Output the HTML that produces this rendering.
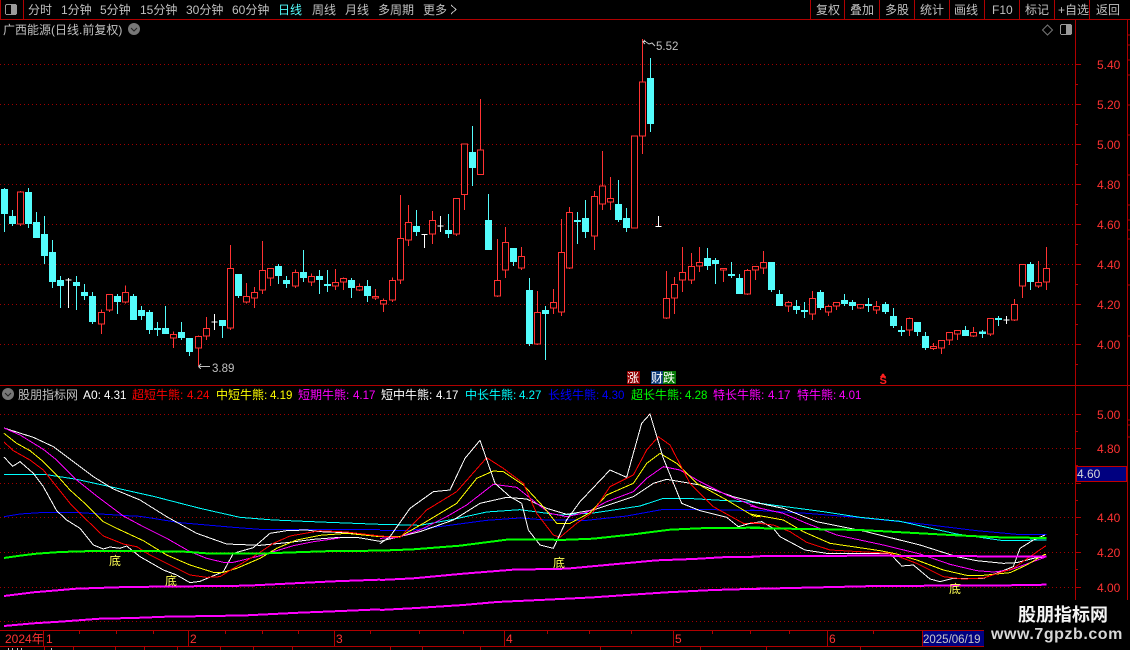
<!DOCTYPE html>
<html><head><meta charset="utf-8"><style>
html,body{margin:0;padding:0;background:#000;width:1130px;height:650px;overflow:hidden}
svg{position:absolute;left:0;top:0;display:block}
text{font-family:"Liberation Sans","WenQuanYi Zen Hei","Noto Sans CJK SC",sans-serif;font-size:12px;fill:#c0c0c0;white-space:pre}
.l{stroke:#b00000;stroke-width:1;fill:none}
.g{stroke:#a00000;stroke-width:1;stroke-dasharray:1 3;fill:none}
.ax{fill:#ff3232;font-size:12px}
.n{font-size:11.5px}
.z{stroke-width:3;fill:none}
.d{fill:#ffff54;font-size:12px}
</style></head><body>
<svg width="1130" height="650" viewBox="0 0 1130 650" shape-rendering="crispEdges">
<rect width="1130" height="650" fill="#000"/>

<!-- toolbar -->
<path class="l" d="M0 19.5H1130M.5 0V19M23.5 0V19M810.5 0V19M844.5 0V19M879.5 0V19M914.5 0V19M949.5 0V19M984.5 0V19M1019.5 0V19M1054.5 0V19M1089.5 0V19"/>
<rect x="5.5" y="4.5" width="11" height="10" rx="1.5" fill="none" stroke="#999"/><rect x="11" y="5" width="5" height="9" fill="#999"/>
<text x="28" y="14">分时</text><text x="61" y="14">1分钟</text><text x="100" y="14">5分钟</text><text x="140" y="14">15分钟</text><text x="186" y="14">30分钟</text><text x="232" y="14">60分钟</text>
<text x="278" y="14" style="fill:#54fcfc">日线</text><text x="312" y="14">周线</text><text x="345" y="14">月线</text><text x="378" y="14">多周期</text><text x="423" y="14">更多</text>
<path d="M451 5L456 9.5L451 14" fill="none" stroke="#c0c0c0"/>
<text x="816" y="14">复权</text><text x="850" y="14">叠加</text><text x="885" y="14">多股</text><text x="920" y="14">统计</text><text x="954" y="14">画线</text><text x="992" y="14">F10</text><text x="1025" y="14">标记</text><text x="1058" y="14">+自选</text><text x="1096" y="14">返回</text>

<!-- title -->
<text x="3" y="34">广西能源(日线.前复权)</text>
<circle cx="134" cy="29" r="6" fill="#777" shape-rendering="auto"/>
<path d="M131 28L134 31L137 28" fill="none" stroke="#222" shape-rendering="auto"/>
<path d="M1047.5 25L1052.5 30L1047.5 35L1042.5 30Z" fill="none" stroke="#777" shape-rendering="auto"/>
<rect x="1060.5" y="24.5" width="11" height="10" rx="1.5" fill="none" stroke="#999"/><rect x="1066" y="25" width="5" height="9" fill="#999"/>

<!-- axes -->
<path class="l" d="M1075.5 19V630M1127.5 19V630M0 385.5H1130M0 630.5H1130M0 646.5H1130"/>
<path class="g" d="M0 64.5H1075M0 104.5H1075M0 144.5H1075M0 184.5H1075M0 224.5H1075M0 264.5H1075M0 304.5H1075M0 344.5H1075"/>
<path class="g" d="M0 414.5H1075M0 448.5H1075M0 483.5H1075M0 517.5H1075M0 552.5H1075M0 587.5H1075M0 621.5H1075"/>
<path class="l" d="M1075 64.5h6M1075 104.5h6M1075 144.5h6M1075 184.5h6M1075 224.5h6M1075 264.5h6M1075 304.5h6M1075 344.5h6M1075 84.5h3M1075 124.5h3M1075 164.5h3M1075 204.5h3M1075 244.5h3M1075 284.5h3M1075 324.5h3M1075 364.5h3M1075 414.5h6M1075 448.5h6M1075 483.5h6M1075 517.5h6M1075 552.5h6M1075 587.5h6M1075 431.5h3M1075 465.5h3M1075 500.5h3M1075 534.5h3M1075 569.5h3M1075 604.5h3"/>
<path class="l" d="M1127 35h3M1127 45h3M1127 60h3M1127 75h3M1127 105h3M1127 135h3M1127 175h3M1127 205h3M1127 220h3M1127 230h3M1127 239h3M1127 285h3M1127 336h3M1127 420h3M1127 425h3M1127 437h3"/>
<text class="ax" x="1097" y="69">5.40</text><text class="ax" x="1097" y="109">5.20</text><text class="ax" x="1097" y="149">5.00</text><text class="ax" x="1097" y="189">4.80</text><text class="ax" x="1097" y="229">4.60</text><text class="ax" x="1097" y="269">4.40</text><text class="ax" x="1097" y="309">4.20</text><text class="ax" x="1097" y="349">4.00</text>
<text class="ax" x="1097" y="419">5.00</text><text class="ax" x="1097" y="453">4.80</text><text class="ax" x="1097" y="522">4.40</text><text class="ax" x="1097" y="557">4.20</text><text class="ax" x="1097" y="592">4.00</text>
<rect x="1076.5" y="466.5" width="50" height="15" fill="#000080" stroke="#c00000"/>
<text x="1077" y="478" style="fill:#d8d8d8">4.60</text>

<!-- candles left -->
<g transform="translate(.17 190.17) scale(.33333)">
<path class="z" stroke="#ff3232" d="M61 3V107M304 358V432M328 313V366M376 286V340M520 424V474M595 436V528M619 381V450M691 165V420M739 279V340M763 291V354M787 153V312M811 235V288M886 238V294M934 250V288M1006 237V300M1030 262V300M1078 280V302M1126 297V330"/>
<path stroke-width="3" stroke="#ff3232" fill="#000" d="M52 6h18V102h-18zM295 367h18V402h-18zM319 313h18V360h-18zM367 307h18V336h-18zM511 433h18V443h-18zM586 439h18V474h-18zM610 415h18V438h-18zM682 235h18V414h-18zM730 319h18V336h-18zM754 307h18V324h-18zM778 241h18V300h-18zM802 235h18V264h-18zM877 247h18V288h-18zM925 259h18V275h-18zM997 277h18V288h-18zM1021 265h18V275h-18zM1069 289h18V300h-18zM1117 319h18V324h-18z"/>
<path class="z" stroke="#54fcfc" d="M13-6V126M37 60V108M85-6V114M109 66V144M133 78V222M157 150V294M181 258V354M229 258V360M253 282V330M277 306V402M352 312V372M400 312V390M424 348V390M448 360V432M472 396V438M496 348V432M544 396V450M568 444V498M667 390V444M715 252V324M835 222V282M859 258V294M910 180V276M958 240V312M982 240V306M1054 264V324M1102 270V336"/>
<path fill="#54fcfc" d="M2.5 -3h21V71h-21zM26.5 78h21V102h-21zM74.5 6h21V102h-21zM98.5 96h21V144h-21zM122.5 132h21V198h-21zM146.5 186h21V276h-21zM170.5 270h21V288h-21zM218.5 276h21V288h-21zM242.5 306h21V318h-21zM266.5 318h21V396h-21zM341.5 318h21V336h-21zM389.5 318h21V390h-21zM413.5 360h21V378h-21zM437.5 366h21V420h-21zM461.5 414h21V420h-21zM485.5 414h21V432h-21zM533.5 426h21V444h-21zM557.5 444h21V486h-21zM656.5 390h21V408h-21zM704.5 252h21V318h-21zM824.5 228h21V258h-21zM848.5 270h21V282h-21zM899.5 246h21V264h-21zM947.5 258h21V270h-21zM971.5 282h21V288h-21zM1043.5 270h21V294h-21zM1091.5 288h21V318h-21z"/>
<path class="z" stroke="#fff" d="M205 264V354M196 270h18M643 372V420M634 396h18"/>
</g>

<!-- candles middle -->
<g transform="translate(380.17 190.17) scale(.33333)">
<path class="z" stroke="#ff3232" d="M10 325V366M37 262V336M61 15V282M85 45V168M157 63V162M229 25V138M253-138V60M301-273V-45M352 147V320M376 111V264M424 171V240M472 303V464M520 297V372M544 87V378M568 51V236M643 3V180M667-117V60M691-39V60M763-162V115M787-453V-108M859 243V386M883 261V372M907 171V306M934 189V282M958 171V246M1030 234V276M1102 237V314"/>
<path stroke-width="3" stroke="#ff3232" fill="#000" d="M1 331h18V342h-18zM28 271h18V330h-18zM52 145h18V270h-18zM76 97h18V150h-18zM148 91h18V132h-18zM220 25h18V132h-18zM244 -138h18V13h-18zM292 -120h18V-47h-18zM343 271h18V318h-18zM367 157h18V240h-18zM415 199h18V234h-18zM463 367h18V462h-18zM511 337h18V354h-18zM535 187h18V366h-18zM559 67h18V234h-18zM634 19h18V138h-18zM658 -12h18V42h-18zM682 25h18V35h-18zM754 -162h18V113h-18zM778 -324h18V-162h-18zM850 325h18V384h-18zM874 283h18V324h-18zM898 247h18V270h-18zM925 229h18V270h-18zM949 217h18V228h-18zM1021 235h18V240h-18zM1093 241h18V312h-18z"/>
<path class="z" stroke="#54fcfc" d="M109 60V138M205 72V144M277-192V-12M325 12V180M400 174V228M448 264V468M496 348V510M592 66V162M616 30V144M715-30V96M739 54V126M811-396V-174M982 174V240M1006 204V282M1054 216V264M1078 252V312"/>
<path fill="#54fcfc" d="M98.5 108h21V126h-21zM194.5 120h21V132h-21zM266.5 -114h21V-66h-21zM314.5 90h21V180h-21zM389.5 174h21V216h-21zM437.5 300h21V462h-21zM485.5 360h21V372h-21zM581.5 90h21V96h-21zM605.5 84h21V126h-21zM704.5 42h21V90h-21zM728.5 84h21V114h-21zM800.5 -336h21V-198h-21zM971.5 204h21V228h-21zM995.5 210h21V222h-21zM1043.5 252h21V258h-21zM1067.5 264h21V312h-21z"/>
<path class="z" stroke="#fff" d="M133 132V174M124 133h18M181 78V126M172 108h18M835 78V110M826 109h18"/>
</g>

<!-- candles right -->
<g transform="translate(750.17 190.17) scale(.33333)">
<path class="z" stroke="#ff3232" d="M16 229V270M40 183V252M115 333V366M187 303V390M235 345V378M259 336V360M331 342V356M379 333V372M478 382V438M550 459V480M574 451V492M598 427V464M622 421V450M670 411V440M721 383V438M793 327V392M817 223V324M865 213V294M889 171V300"/>
<path stroke-width="3" stroke="#ff3232" fill="#000" d="M7 229h18V240h-18zM31 217h18V234h-18zM106 337h18V348h-18zM178 325h18V372h-18zM226 349h18V366h-18zM250 337h18V347h-18zM322 343h18V354h-18zM370 349h18V360h-18zM469 385h18V420h-18zM541 469h18V475h-18zM565 451h18V474h-18zM589 427h18V450h-18zM613 421h18V432h-18zM661 427h18V438h-18zM712 385h18V432h-18zM784 343h18V390h-18zM808 223h18V288h-18zM856 277h18V288h-18zM880 235h18V276h-18z"/>
<path class="z" stroke="#54fcfc" d="M64 216V306M88 300V348M139 330V372M163 336V384M211 300V360M283 312V348M307 330V360M355 324V366M406 336V372M430 354V414M454 408V438M502 396V438M526 426V480M646 408V438M697 420V444M745 378V408M841 216V300"/>
<path fill="#54fcfc" d="M53.5 216h21V300h-21zM77.5 312h21V348h-21zM128.5 348h21V360h-21zM152.5 360h21V366h-21zM200.5 306h21V354h-21zM272.5 330h21V342h-21zM296.5 336h21V348h-21zM344.5 342h21V348h-21zM395.5 342h21V366h-21zM419.5 378h21V408h-21zM443.5 420h21V426h-21zM491.5 396h21V426h-21zM515.5 438h21V474h-21zM635.5 420h21V438h-21zM686.5 424h21V432h-21zM734.5 384h21V390h-21zM830.5 222h21V276h-21z"/>
<path class="z" stroke="#fff" d="M769 378V402M760 390h18"/>
</g>

<!-- markers -->
<path d="M642.5 41.5H646M643 42L645 40M643 42L645 44M646 42L649 44L652 43L655 46" fill="none" stroke="#c8c8c8" shape-rendering="auto"/>
<text x="656" y="50" class="n">5.52</text>
<path d="M198.5 366.5H210M198.5 366.5L201 364M198.5 366.5L201 369" fill="none" stroke="#c0c0c0"/>
<text x="212" y="372" class="n">3.89</text>
<rect x="627" y="371" width="13" height="13" fill="#900000"/><text x="627" y="382" style="fill:#fff">涨</text>
<rect x="651" y="371" width="12" height="13" fill="#103c78"/><text x="651" y="382" style="fill:#fff">财</text>
<rect x="663" y="371" width="13" height="13" fill="#087808"/><text x="663" y="382" style="fill:#fff">跌</text>
<path d="M883 373l3 4h-6z" fill="#ff2020"/><text x="879.500" y="384" style="fill:#ff2020;font-size:11px;font-weight:bold">S</text>

<!-- legend -->
<circle cx="8" cy="394" r="6" fill="#777" shape-rendering="auto"/>
<path d="M5 393L8 396L11 393" fill="none" stroke="#222" shape-rendering="auto"/>
<text x="18" y="399">股朋指标网</text>
<text x="83" y="399" style="fill:#fff">A0:</text><text x="104" y="399" class="n" style="fill:#fff">4.31</text>
<text x="132" y="399" style="fill:#ff0000">超短牛熊:</text><text x="187" y="399" class="n" style="fill:#ff0000">4.24</text>
<text x="216" y="399" style="fill:#ffff00">中短牛熊:</text><text x="270" y="399" class="n" style="fill:#ffff00">4.19</text>
<text x="298" y="399" style="fill:#ff00ff">短期牛熊:</text><text x="353" y="399" class="n" style="fill:#ff00ff">4.17</text>
<text x="381" y="399" style="fill:#fff">短中牛熊:</text><text x="436" y="399" class="n" style="fill:#fff">4.17</text>
<text x="465" y="399" style="fill:#00ffff">中长牛熊:</text><text x="519" y="399" class="n" style="fill:#00ffff">4.27</text>
<text x="548" y="399" style="fill:#0000ff">长线牛熊:</text><text x="602" y="399" class="n" style="fill:#0000ff">4.30</text>
<text x="631" y="399" style="fill:#00ff00">超长牛熊:</text><text x="685" y="399" class="n" style="fill:#00ff00">4.28</text>
<text x="713" y="399" style="fill:#ff00ff">特长牛熊:</text><text x="768" y="399" class="n" style="fill:#ff00ff">4.17</text>
<text x="797" y="399" style="fill:#ff00ff">特牛熊:</text><text x="839" y="399" class="n" style="fill:#ff00ff">4.01</text>

<!-- indicator lines -->
<g fill="none" stroke-linejoin="round">
<g transform="translate(0 380) scale(.33333)">
<polyline stroke="#00ffff" stroke-width="3" points="12,283 140,284 230,298 330,320 460,349 600,385 720,412 820,420 960,426 1140,433"/>
<polyline stroke="#0000ff" stroke-width="3" points="12,410 60,402 120,398 240,398 380,407 420,409 540,428 700,442 780,448 1140,448"/>
<polyline stroke="#fff" stroke-width="3" points="12,144 100,172 160,200 220,245 280,290 340,327 420,360 500,410 590,460 680,492 780,496 860,488 940,478 1020,472 1070,472 1140,484"/>
<polyline stroke="#fff" stroke-width="3" points="12,231 38,259 60,245 100,280 130,320 170,392 200,420 240,445 280,495 310,507 330,501 360,505 380,498 420,530 490,570 530,585 570,608 600,604 670,575 700,520 760,503 810,460 860,452 920,450 960,455 1040,458 1140,470"/>
<polyline stroke="#ff00ff" stroke-width="3" points="12,144 60,165 130,208 170,240 230,300 290,348 370,408 430,440 500,475 570,515 620,535 670,547 700,547 770,530 820,515 880,497 940,485 1020,474"/>
<polyline stroke="#ffff00" stroke-width="3" points="12,160 50,190 90,212 130,245 170,285 210,330 260,375 310,425 350,445 430,482 500,525 570,555 640,577 670,577 710,565 780,535 830,505 890,480 960,466 1040,460 1140,470"/>
<polyline stroke="#ff0000" stroke-width="3" points="12,186 40,212 90,240 130,270 170,320 210,370 260,420 310,468 370,492 410,500 450,525 500,550 570,585 620,592 660,590 700,565 760,530 820,490 870,468 960,452 1040,456 1140,468"/>
<polyline stroke="#00ff00" stroke-width="6" points="12,534 60,527 110,521 180,516 280,513 540,514 620,520 800,520 910,516 1000,513 1140,512"/>
<polyline stroke="#ff00ff" stroke-width="6" points="12,648 100,637 230,626 380,621 740,617 880,610 1000,604 1140,599"/>
<polyline stroke="#ff00ff" stroke-width="6" points="12,738 100,730 180,725 300,716 400,714 500,710 640,708 740,706 900,698 1000,694 1140,688"/>
</g>
<g transform="translate(380 380) scale(.33333)">
<polyline stroke="#00ffff" stroke-width="3" points="0,433 120,436 220,418 320,396 420,389 540,405 640,399 780,378 850,355 920,355 1040,362 1140,368"/>
<polyline stroke="#0000ff" stroke-width="3" points="0,451 90,451 200,437 320,421 420,414 500,420 620,421 740,408 850,388 950,388 1140,392"/>
<polyline stroke="#fff" stroke-width="3" points="0,484 50,472 120,455 220,420 300,370 380,352 440,357 500,385 560,403 640,390 760,350 820,310 860,298 960,315 1060,350 1140,370"/>
<polyline stroke="#ff00ff" stroke-width="3" points="0,475 50,473 120,450 200,410 260,375 340,313 410,322 470,370 510,400 560,410 620,397 680,365 760,335 800,295 850,260 900,270 960,305 1040,345 1140,385"/>
<polyline stroke="#ffff00" stroke-width="3" points="0,470 60,470 130,430 230,370 290,295 340,273 370,275 430,315 490,380 530,430 570,430 630,398 680,345 760,310 800,250 840,220 890,250 950,310 1040,360 1120,408 1140,410"/>
<polyline stroke="#ff0000" stroke-width="3" points="0,468 60,472 140,390 230,335 320,233 370,265 430,310 470,400 520,465 540,472 590,430 640,395 690,320 760,285 800,210 835,170 870,195 930,310 1000,380 1090,430 1140,430"/>
<polyline stroke="#fff" stroke-width="3" points="0,491 30,470 90,385 160,335 210,330 255,235 300,181 345,310 390,350 425,370 445,450 480,495 520,505 560,420 600,365 690,270 740,292 785,130 810,102 850,235 905,370 960,392 1040,412 1075,440 1110,430"/>
<polyline stroke="#00ff00" stroke-width="6" points="0,512 100,508 240,497 380,479 490,478 540,480 640,476 760,463 870,449 980,444 1140,443"/>
<polyline stroke="#ff00ff" stroke-width="6" points="0,600 100,595 250,581 400,569 560,566 700,553 830,541 940,537 1040,531 1140,530"/>
<polyline stroke="#ff00ff" stroke-width="6" points="0,690 110,684 250,675 350,666 500,659 640,652 740,645 860,637 1000,630 1140,626"/>
</g>
<g transform="translate(750 380) scale(.33333)">
<polyline stroke="#0000ff" stroke-width="3" points="0,390 170,400 320,412 500,430 680,452 800,463 890,464"/>
<polyline stroke="#00ffff" stroke-width="3" points="0,366 220,395 330,412 450,424 620,462 760,482 890,480"/>
<polyline stroke="#fff" stroke-width="3" points="0,364 100,385 200,425 340,453 510,495 620,530 680,542 760,550 800,548 850,535 890,530"/>
<polyline stroke="#fff" stroke-width="3" points="0,430 35,425 70,445 90,470 165,510 230,520 420,520 455,558 490,555 540,597 570,605 610,595 700,595 790,560 810,505 850,480 885,465"/>
<polyline stroke="#ff00ff" stroke-width="3" points="0,378 100,400 170,430 260,465 400,495 510,522 600,553 680,572 730,576 780,570 830,552 890,530"/>
<polyline stroke="#ffff00" stroke-width="3" points="0,402 100,420 160,455 240,490 390,512 440,522 500,540 580,570 650,586 700,586 780,578 830,555 880,525 888,523"/>
<polyline stroke="#ff0000" stroke-width="3" points="0,427 70,435 120,455 170,487 240,510 420,520 500,550 580,590 640,597 700,594 790,565 840,530 888,497"/>
<polyline stroke="#00ff00" stroke-width="6" points="0,444 330,450 620,466 750,472 890,474"/>
<polyline stroke="#ff00ff" stroke-width="6" points="0,531 40,528 380,527 890,530"/>
<polyline stroke="#ff00ff" stroke-width="6" points="0,627 80,625 210,622 380,618 770,616 890,614"/>
</g>
</g>
<text class="d" x="109" y="565">底</text><text class="d" x="165" y="585">底</text><text class="d" x="553" y="567">底</text><text class="d" x="949" y="593">底</text>

<!-- time axis -->
<path class="l" d="M43.5 630V646M188.500 630V646M334.500 630V646M504.500 630V646M673.500 630V646M827.500 630V646M79.500 630v4M116.500 630v4M153.500 630v4M225.500 630v4M262.500 630v4M298.500 630v4M370.500 630v4M419.500 630v4M463.500 630v4M547.500 630v4M589.500 630v4M631.500 630v4M712.500 630v4M750.500 630v4M789.500 630v4M873.500 630v4M44.500 646v4M73.500 646v4M115.500 646v4M144.500 646v4M177.500 646v4M220.500 646v4M253.500 646v4M292.500 646v4M390.500 646v4M422.500 646v4M480.500 646v4M600.500 646v4M700.500 646v4M766.500 646v4M860.500 646v4"/>
<path d="M8.500 648v2M12.500 648v2M17.500 648v2M21.500 648v2M51.500 648v2" stroke="#c0c0c0" fill="none"/>
<text class="ax" x="5" y="643">2024年</text><text class="ax" x="46" y="643">1</text><text class="ax" x="190" y="643">2</text><text class="ax" x="336" y="643">3</text><text class="ax" x="506" y="643">4</text><text class="ax" x="675" y="643">5</text><text class="ax" x="829" y="643">6</text>
<rect x="923" y="631" width="62" height="15" fill="#000080"/><path class="l" d="M922.500 630V646"/>
<text x="923" y="643" class="n" style="fill:#c8c8c8">2025/06/19</text>

<!-- watermark -->
<rect x="984" y="600" width="146" height="50" fill="#000"/>
<text x="1018" y="621" style="fill:#f4f4f4;font-size:18px;font-weight:bold;font-family:'Noto Sans CJK SC','WenQuanYi Zen Hei',sans-serif" shape-rendering="auto">股朋指标网</text>
<text x="991" y="639" style="fill:#d8d8d8;font-size:16px;font-weight:bold;letter-spacing:.55px">www.7gpzb.com</text>
</svg>
</body></html>
